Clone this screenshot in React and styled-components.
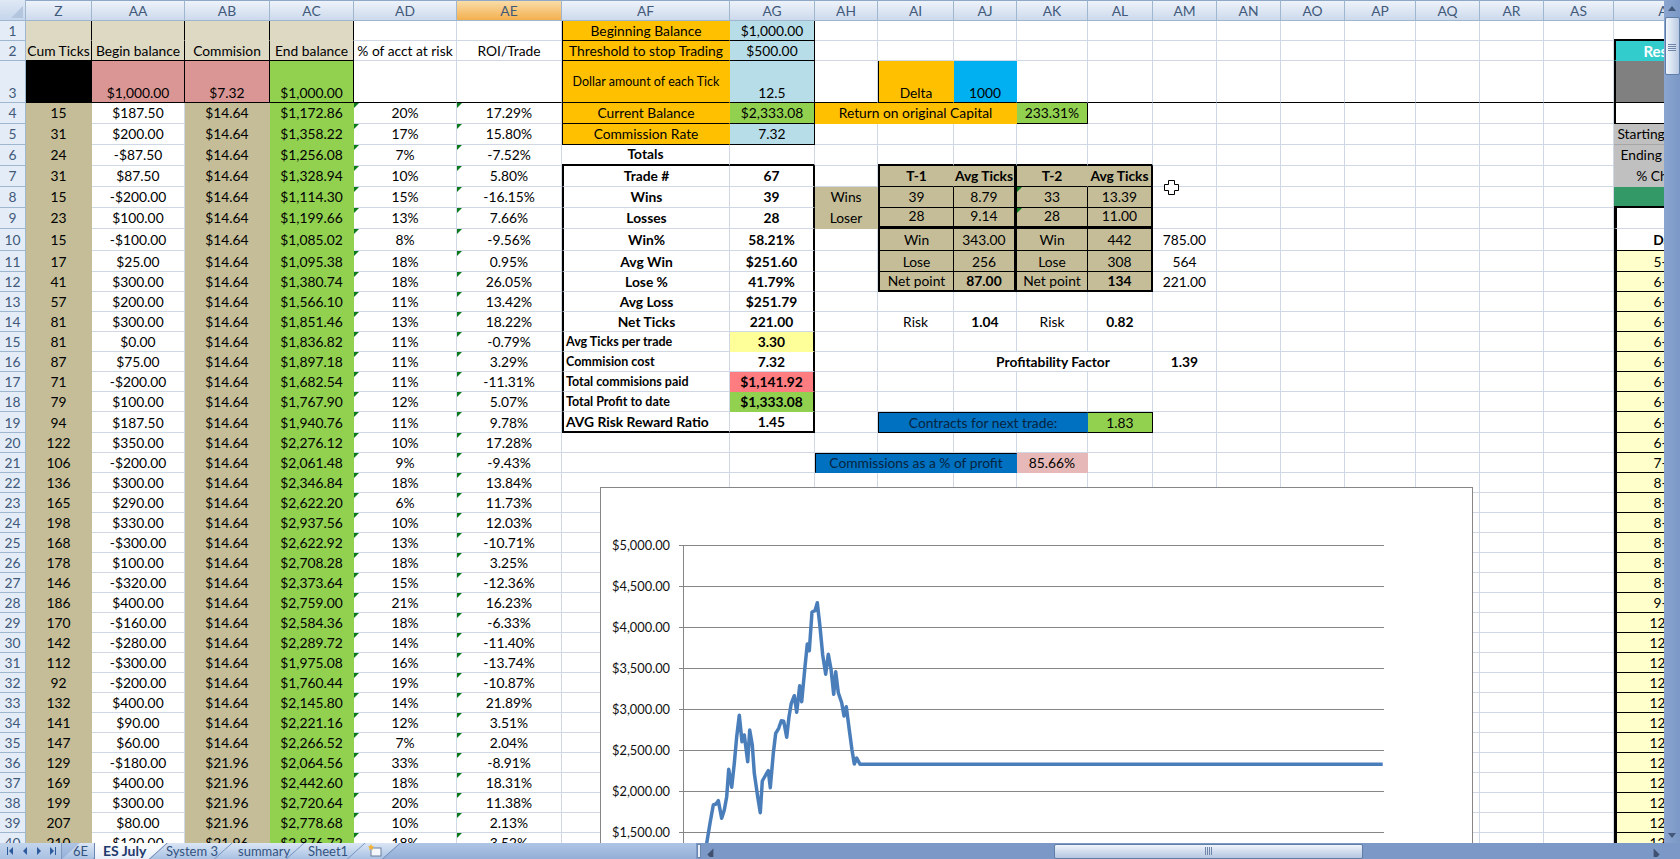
import styled, { createGlobalStyle } from 'styled-components';

const GRID = '#d0d7e5';
const TAN = '#c4bd97';
const TAN_LIGHT = '#ddd9c3';
const ORANGE = '#ffc000';
const SKY = '#b7dde8';
const GREEN = '#92d050';
const ROSE = '#d99694';
const BLUE = '#0070c0';

const COLUMNS = [
  ['Z', 66], ['AA', 93], ['AB', 85], ['AC', 84], ['AD', 103], ['AE', 105], ['AF', 168], ['AG', 85],
  ['AH', 63], ['AI', 76], ['AJ', 63], ['AK', 71], ['AL', 65], ['AM', 64], ['AN', 64], ['AO', 64],
  ['AP', 71], ['AQ', 64], ['AR', 64], ['AS', 70], ['AT', 106],
];
const LAST_ROW = 40;

const rowHeight = (r) => {
  if (r === 3) return 42;
  if (r === 10) return 22;
  if (r >= 4 && r <= 9) return 21;
  if (r === 11 || r === 19) return 21;
  return 20;
};

// rows 4 to 10 sit a pixel higher in their taller cells
const rowLine = (r) => (r >= 4 && r <= 10 ? 20 : 18);

const trades = [
  [15, '$187.50', '$1,172.86', '20%', '17.29%'], [31, '$200.00', '$1,358.22', '17%', '15.80%'],
  [24, '-$87.50', '$1,256.08', '7%', '-7.52%'], [31, '$87.50', '$1,328.94', '10%', '5.80%'],
  [15, '-$200.00', '$1,114.30', '15%', '-16.15%'], [23, '$100.00', '$1,199.66', '13%', '7.66%'],
  [15, '-$100.00', '$1,085.02', '8%', '-9.56%'], [17, '$25.00', '$1,095.38', '18%', '0.95%'],
  [41, '$300.00', '$1,380.74', '18%', '26.05%'], [57, '$200.00', '$1,566.10', '11%', '13.42%'],
  [81, '$300.00', '$1,851.46', '13%', '18.22%'], [81, '$0.00', '$1,836.82', '11%', '-0.79%'],
  [87, '$75.00', '$1,897.18', '11%', '3.29%'], [71, '-$200.00', '$1,682.54', '11%', '-11.31%'],
  [79, '$100.00', '$1,767.90', '12%', '5.07%'], [94, '$187.50', '$1,940.76', '11%', '9.78%'],
  [122, '$350.00', '$2,276.12', '10%', '17.28%'], [106, '-$200.00', '$2,061.48', '9%', '-9.43%'],
  [136, '$300.00', '$2,346.84', '18%', '13.84%'], [165, '$290.00', '$2,622.20', '6%', '11.73%'],
  [198, '$330.00', '$2,937.56', '10%', '12.03%'], [168, '-$300.00', '$2,622.92', '13%', '-10.71%'],
  [178, '$100.00', '$2,708.28', '18%', '3.25%'], [146, '-$320.00', '$2,373.64', '15%', '-12.36%'],
  [186, '$400.00', '$2,759.00', '21%', '16.23%'], [170, '-$160.00', '$2,584.36', '18%', '-6.33%'],
  [142, '-$280.00', '$2,289.72', '14%', '-11.40%'], [112, '-$300.00', '$1,975.08', '16%', '-13.74%'],
  [92, '-$200.00', '$1,760.44', '19%', '-10.87%'], [132, '$400.00', '$2,145.80', '14%', '21.89%'],
  [141, '$90.00', '$2,221.16', '12%', '3.51%'], [147, '$60.00', '$2,266.52', '7%', '2.04%'],
  [129, '-$180.00', '$2,064.56', '33%', '-8.91%'], [169, '$400.00', '$2,442.60', '18%', '18.31%'],
  [199, '$300.00', '$2,720.64', '20%', '11.38%'], [207, '$80.00', '$2,778.68', '10%', '2.13%'],
  [210, '$120.00', '$2,876.72', '18%', '3.52%'],
];

const dates = ['5-Jul', '6-Jul', '6-Jul', '6-Jul', '6-Jul', '6-Jul', '6-Jul', '6-Jul', '6-Jul', '6-Jul', '7-Jul',
  '8-Jul', '8-Jul', '8-Jul', '8-Jul', '8-Jul', '8-Jul', '9-Jul'];

// every filled or written cell, by its A1 reference
const cells = {};
const put = (ref, text, props = {}) => {
  cells[ref] = { text, ...props };
};

['Z', 'AA', 'AB', 'AC'].forEach((col) => {
  put(`${col}1`, '', { $fill: TAN_LIGHT, $r: 1 });
  put(`${col}3`, '', { $r: 1 });
});
put('Z1', '', { $fill: TAN_LIGHT, $r: 1 });
put('Z2', 'Cum Ticks', { $fill: TAN_LIGHT, $r: 1, $b: 1 });
put('AA2', 'Begin balance', { $fill: TAN_LIGHT, $r: 1, $b: 1 });
put('AB2', 'Commision', { $fill: TAN_LIGHT, $r: 1, $b: 1 });
put('AC2', 'End balance', { $fill: TAN_LIGHT, $r: 1, $b: 1 });
put('AD2', '% of acct at risk');
put('AE2', 'ROI/Trade');
put('Z3', '', { $fill: '#000', $r: 1 });
put('AA3', '$1,000.00', { $fill: ROSE, $r: 1 });
put('AB3', '$7.32', { $fill: ROSE, $r: 1 });
put('AC3', '$1,000.00', { $fill: GREEN, $r: 1 });

trades.forEach(([ticks, begin, end, risk, roi], i) => {
  const r = i + 4;
  put(`Z${r}`, ticks, { $fill: TAN });
  put(`AA${r}`, begin);
  put(`AB${r}`, r >= 36 ? '$21.96' : '$14.64', { $fill: TAN });
  put(`AC${r}`, end, { $fill: GREEN });
  put(`AD${r}`, risk, { $mark: true });
  put(`AE${r}`, roi, { $mark: true });
});

// settings block
[
  ['Beginning Balance', '$1,000.00', SKY],
  ['Threshold to stop Trading', '$500.00', SKY],
  ['Dollar amount of each Tick', '12.5', SKY],
  ['Current Balance', '$2,333.08', GREEN],
  ['Commission Rate', '7.32', SKY],
].forEach(([label, value, fill], i) => {
  const r = i + 1;
  put(`AF${r}`, label, { $fill: ORANGE, $l: 1, $b: 1, $small: r === 3, $mid: r === 3 });
  put(`AG${r}`, value, { $fill: fill, $r: 1, $b: 1 });
});
put('AF6', 'Totals', { $bold: true, $b: 2 });
put('AG6', '', { $b: 2 });

// totals box
[
  ['Trade #', '67'], ['Wins', '39'], ['Losses', '28'], ['Win%', '58.21%'], ['Avg Win', '$251.60'], ['Lose %', '41.79%'],
  ['Avg Loss', '$251.79'], ['Net Ticks', '221.00'],
].forEach(([label, value], i) => {
  put(`AF${i + 7}`, label, { $bold: true, $l: 2 });
  put(`AG${i + 7}`, value, { $bold: true, $r: 2 });
});
[
  ['Avg Ticks per trade', '3.30', '#ffff99'], ['Commision cost', '7.32'], ['Total commisions paid', '$1,141.92', '#ff7c80'],
  ['Total Profit to date', '$1,333.08', GREEN],
].forEach(([label, value, fill], i) => {
  put(`AF${i + 15}`, label, { $bold: true, $l: 2, $left: true, $small: true });
  put(`AG${i + 15}`, value, { $bold: true, $r: 2, $fill: fill });
});
put('AF19', 'AVG Risk Reward Ratio', { $bold: true, $l: 2, $b: 2, $left: true });
put('AG19', '1.45', { $bold: true, $r: 2, $b: 2 });

put('AI3', 'Delta', { $fill: ORANGE, $l: 1 });
put('AJ3', '1000', { $fill: '#00b0f0' });
put('AH4', 'Return on original Capital', { $fill: ORANGE, $span: 3 });
put('AK4', '233.31%', { $fill: GREEN, $r: 1, $b: 1 });

// T-1 / T-2 table
['AI', 'AJ', 'AK', 'AL'].forEach((col) => put(`${col}6`, '', { $b: 2 }));
[
  ['T-1', 'Avg Ticks', 'T-2', 'Avg Ticks'],
  ['39', '8.79', '33', '13.39'],
  ['28', '9.14', '28', '11.00'],
  ['Win', '343.00', 'Win', '442'],
  ['Lose', '256', 'Lose', '308'],
  ['Net point', '87.00', 'Net point', '134'],
].forEach((row, i) => {
  const r = i + 7;
  let bottom = 1;
  if (r === 9) bottom = 3;
  if (r === 12) bottom = 2;
  const base = { $fill: TAN, $b: bottom, $bold: r === 7 };
  const strong = r === 12 ? { $bold: true } : {};
  const inner = r === 7 ? {} : { $r: 1 };
  put(`AI${r}`, row[0], { ...base, ...inner, $l: 2 });
  put(`AJ${r}`, row[1], { ...base, ...strong, $r: 3 });
  put(`AK${r}`, row[2], { ...base, ...inner, $mark: r === 8 || r === 9 });
  put(`AL${r}`, row[3], { ...base, ...strong, $r: 2 });
});
put('AH8', 'Wins', { $fill: TAN });
put('AH9', 'Loser', { $fill: TAN });
put('AM10', '785.00');
put('AM11', '564');
put('AM12', '221.00');
put('AI14', 'Risk');
put('AJ14', '1.04', { $bold: true });
put('AK14', 'Risk');
put('AL14', '0.82', { $bold: true });
put('AJ16', 'Profitability Factor', { $bold: true, $span: 3 });
put('AM16', '1.39', { $bold: true });
put('AI19', 'Contracts for next trade:', { $fill: BLUE, $span: 3, $l: 1, $t: 1, $b: 1, $ink: '#06243f' });
put('AL19', '1.83', { $fill: GREEN, $b: 1, $r: 1, $t: 1 });
put('AH21', 'Commissions as a % of profit', { $fill: BLUE, $span: 3, $l: 1, $t: 1, $ink: '#06243f' });
put('AK21', '85.66%', { $fill: '#e6b8b7' });

// results column, cut off by the scroll bar
put('AT1', '', { $b: 2 });
put('AT2', 'Results', { $fill: '#33cccc', $l: 2, $bold: true, $big: true, $ink: '#fff' });
put('AT3', '', { $fill: '#808080', $l: 2 });
put('AT4', '', { $l: 2, $b: 1 });
put('AT5', 'Starting Balance', { $fill: '#c0c0c0', $b: 1, $lineInk: '#a6a6a6' });
put('AT6', 'Ending Balance', { $fill: '#c0c0c0' });
put('AT7', '% Change', { $fill: '#c0c0c0' });
put('AT8', '', { $fill: '#339966', $b: 2 });
put('AT9', '', { $l: 3 });
put('AT10', 'Date', { $l: 3, $bold: true, $b: 1 });
for (let r = 11; r <= LAST_ROW; r += 1) {
  put(`AT${r}`, dates[r - 11] || '12-Jul', { $fill: '#ffffcc', $l: 3, $b: 1 });
}

// blue line read off the chart, in px from the top left of the plot window
const equity = [
  [350, 1090], [360, 1030], [370, 975], [378, 972], [385, 962], [395, 1015], [403, 990], [410, 950], [416, 868], [425, 922],
  [433, 850], [440, 770], [448, 706], [456, 785], [463, 765], [473, 845], [479, 750], [487, 795], [493, 880], [503, 950],
  [511, 998], [517, 903], [527, 885], [535, 872], [541, 923], [550, 820], [557, 760], [566, 745], [574, 722], [581, 724],
  [590, 772], [597, 710], [604, 670], [613, 647], [620, 697], [629, 617], [635, 665], [645, 560], [652, 492], [658, 512],
  [666, 396], [675, 392], [682, 368], [690, 440], [698, 525], [707, 583], [715, 523], [723, 567], [731, 643], [737, 575],
  [745, 638], [755, 668], [762, 708], [769, 680], [778, 750], [786, 810], [793, 852], [800, 834], [810, 853], [2378, 853],
].map(([x, y]) => `${(x / 3 - 11).toFixed(1)},${(y / 3 - 8).toFixed(1)}`).join(' ');

const axisValues = ['$5,000.00', '$4,500.00', '$4,000.00', '$3,500.00', '$3,000.00', '$2,500.00', '$2,000.00', '$1,500.00', '$1,000.00'];

const GlobalStyle = createGlobalStyle`
  html, body {
    margin: 0;
    height: 100%;
    overflow: hidden;
    background: #fff;
  }
`;

const Window = styled.div`
  width: 1680px;
  height: 859px;
  display: flex;
  flex-direction: column;
  font-family: Lato, "Open Sans", "Liberation Sans", sans-serif;
  font-size: 13.8px;
  color: #000;
`;

const Body = styled.div`
  display: flex;
  height: 843px;
`;

const Sheet = styled.div`
  position: relative;
  width: 1664px;
  overflow: hidden;
`;

const Grid = styled.div`
  display: grid;
  grid-template-columns: 26px ${COLUMNS.map(([, w]) => `${w}px`).join(' ')};
  grid-auto-rows: min-content;
`;

const Corner = styled.div`
  height: 21px;
  box-sizing: border-box;
  background: linear-gradient(#dfe8f5, #c6d6ec);
  border-right: 1px solid #9eb6ce;
  border-bottom: 1px solid #9eb6ce;
  position: relative;

  &::after {
    content: '';
    position: absolute;
    right: 2px;
    bottom: 2px;
    border-style: solid;
    border-width: 0 0 12px 12px;
    border-color: transparent transparent #b4c6de transparent;
  }
`;

const ColHead = styled.div`
  height: 21px;
  box-sizing: border-box;
  display: flex;
  align-items: center;
  justify-content: center;
  overflow: hidden;
  color: #41597a;
  border-top: 1px solid #8fa8c8;
  border-right: 1px solid #9eb6ce;
  border-bottom: 1px solid #9eb6ce;
  background: ${(p) => (p.$active ? 'linear-gradient(#f9dca8, #f3b04e)' : 'linear-gradient(#eef3fa 0%, #dde6f3 50%, #cddaec 100%)')};
`;

const RowHead = styled.div`
  height: ${(p) => p.$height}px;
  box-sizing: border-box;
  display: flex;
  align-items: flex-end;
  justify-content: center;
  line-height: ${(p) => p.$line}px;
  color: #41597a;
  background: #e4ecf7;
  border-right: 1px solid #9eb6ce;
  border-bottom: 1px solid #9eb6ce;
`;

const fontSize = (p) => {
  if (p.$small) return '12.5px';
  if (p.$big) return '15px';
  return 'inherit';
};

const Cell = styled.div`
  position: relative;
  box-sizing: border-box;
  min-width: 0;
  height: ${(p) => p.$height}px;
  grid-column: span ${(p) => p.$span || 1};
  display: flex;
  align-items: ${(p) => (p.$mid ? 'center' : 'flex-end')};
  justify-content: ${(p) => (p.$left ? 'flex-start' : 'center')};
  padding: 0 ${(p) => (p.$left ? '2px' : '0')};
  line-height: ${(p) => p.$line}px;
  white-space: nowrap;
  overflow: hidden;
  font-size: ${fontSize};
  font-weight: ${(p) => (p.$bold ? 700 : 400)};
  color: ${(p) => p.$ink || '#000'};
  background: ${(p) => p.$fill || 'transparent'};
  border-right: ${(p) => (p.$r ? `${p.$r}px solid #000` : `1px solid ${p.$fill || GRID}`)};
  border-bottom: ${(p) => (p.$b ? `${p.$b}px solid ${p.$lineInk || '#000'}` : `1px solid ${p.$fill || GRID}`)};
  border-left: ${(p) => (p.$l ? `${p.$l}px solid #000` : 'none')};
  border-top: ${(p) => (p.$t ? `${p.$t}px solid #000` : 'none')};

  ${(p) => p.$mark && `
    &::before {
      content: '';
      position: absolute;
      top: 0;
      left: 0;
      border-style: solid;
      border-width: 5px 5px 0 0;
      border-color: #0b7a1f transparent transparent transparent;
    }
  `}
`;

const ChartBox = styled.div`
  position: absolute;
  left: 600px;
  top: 487px;
  width: 873px;
  height: 440px;
  box-sizing: border-box;
  background: #fff;
  border: 1px solid #868686;
`;

const ChartSvg = styled.svg`
  display: block;
  font-family: Lato, "Open Sans", "Liberation Sans", sans-serif;
  font-size: 12.8px;
  fill: #111;
`;

const PointerIcon = styled.svg`
  position: absolute;
  left: 1164px;
  top: 180px;
`;

const VScroll = styled.div`
  width: 16px;
  display: flex;
  flex-direction: column;
  align-items: center;
  background: linear-gradient(90deg, #8aa5cf, #7b98c6);
`;

const ArrowSlot = styled.div`
  height: 17px;
  display: flex;
  align-items: center;
  justify-content: center;
  flex: none;
`;

const VThumb = styled.div`
  width: 15px;
  height: 58px;
  box-sizing: border-box;
  flex: none;
  display: flex;
  flex-direction: column;
  gap: 1px;
  align-items: center;
  justify-content: flex-start;
  padding-top: 26px;
  background: linear-gradient(90deg, #f1f5fb, #d5e0f0 50%, #b9c9e2);
  border: 1px solid #5f7ea8;
  border-radius: 2px;

  i {
    display: block;
    width: 8px;
    height: 1px;
    background: #6f86a8;
  }
`;

const Track = styled.div`
  flex: 1;
`;

const BottomBar = styled.div`
  height: 16px;
  display: flex;
  isolation: isolate;
  background: #7b98c6;
  font-size: 13px;
`;

const TabArea = styled.div`
  width: 696px;
  flex: none;
  display: flex;
  background: linear-gradient(#aec5e5, #94aed6);
  overflow: hidden;
`;

const NavButtons = styled.div`
  position: relative;
  z-index: 3;
  width: 62px;
  flex: none;
  background: linear-gradient(#c3d5ec, #a9c1e2);
  border-right: 1px solid #7d97bd;
  box-sizing: border-box;

  svg {
    display: block;
  }
`;

const Tab = styled.div`
  position: relative;
  box-sizing: border-box;
  width: ${(p) => p.$width}px;
  padding-left: ${(p) => p.$pad || 0}px;
  flex: none;
  display: flex;
  align-items: center;
  justify-content: flex-start;
  white-space: nowrap;
  line-height: 16px;
  font-size: ${(p) => (p.$active ? '14px' : 'inherit')};
  font-weight: ${(p) => (p.$active ? 700 : 400)};
  color: ${(p) => (p.$active ? '#1e3a6d' : '#33527f')};
  z-index: ${(p) => (p.$active ? 2 : 1)};

  &::before {
    content: '';
    position: absolute;
    inset: 0;
    z-index: -1;
    transform: skewX(-48deg);
    transform-origin: bottom;
    border-right: 1px solid #6a86b0;
    background: ${(p) => (p.$active ? 'linear-gradient(#fff, #e8eef8)' : 'linear-gradient(#dbe6f5, #a8c1e3)')};
  }

  &::after {
    content: '';
    position: absolute;
    top: 0;
    bottom: 0;
    left: 0;
    width: 20px;
    z-index: -1;
    display: ${(p) => (p.$active ? 'block' : 'none')};
    background: linear-gradient(#fff, #e8eef8);
    border-left: 1px solid #6a86b0;
  }
`;

const Splitter = styled.div`
  width: 4px;
  height: 14px;
  margin: 1px 0 1px 1px;
  box-sizing: border-box;
  flex: none;
  background: #e8eef8;
  border: 1px solid #6a86b0;
`;

const HScroll = styled.div`
  flex: 1;
  display: flex;
  align-items: center;
  padding-left: 4px;
`;

const HThumb = styled.div`
  width: 309px;
  height: 15px;
  margin-left: 337px;
  flex: none;
  box-sizing: border-box;
  display: flex;
  align-items: center;
  justify-content: center;
  gap: 1px;
  background: linear-gradient(#f1f5fb, #d0dcee 50%, #b6c7e0);
  border: 1px solid #5f7ea8;
  border-radius: 2px;

  i {
    display: block;
    width: 1px;
    height: 8px;
    background: #6f86a8;
  }
`;

const HEnd = styled.div`
  margin-left: auto;
  width: 32px;
  display: flex;
  align-items: center;
  justify-content: flex-start;
  padding-left: 2px;
  box-sizing: border-box;
`;

const Triangle = ({ points, fill = '#44587a', w = 10, h = 10 }) => (
  <svg width={w} height={h} viewBox="0 0 10 10">
    <polygon points={points} fill={fill} />
  </svg>
);

const renderCells = () => {
  const out = [];
  for (let r = 1; r <= LAST_ROW; r += 1) {
    const height = rowHeight(r);
    const line = rowLine(r);
    out.push(<RowHead key={`h${r}`} $height={height} $line={line}>{r}</RowHead>);
    let skip = 0;
    COLUMNS.forEach(([col]) => {
      if (skip > 0) {
        skip -= 1;
        return;
      }
      const { text = '', ...props } = cells[`${col}${r}`] || {};
      skip = (props.$span || 1) - 1;
      // thick rule under the frozen heading rows runs across the whole sheet
      if (r === 3 && !props.$b) props.$b = 1;
      out.push(<Cell key={`${col}${r}`} $height={height} $line={line} {...props}>{text}</Cell>);
    });
  }
  return out;
};

const App = () => (
  <>
    <GlobalStyle />
    <Window>
      <Body>
        <Sheet>
          <Grid>
            <Corner />
            {COLUMNS.map(([col]) => (
              <ColHead key={col} $active={col === 'AE'}>{col}</ColHead>
            ))}
            {renderCells()}
          </Grid>

          <ChartBox>
            <ChartSvg width="871" height="438">
              {axisValues.map((label, i) => {
                const y = 57.5 + i * 41;
                return (
                  <g key={label}>
                    <line x1="78" x2="783" y1={y} y2={y} stroke="#868686" />
                    <text x="69" y={y + 4.5} textAnchor="end">{label}</text>
                  </g>
                );
              })}
              <line x1="82.5" x2="82.5" y1="57" y2="438" stroke="#868686" />
              <polyline points={equity} fill="none" stroke="#4a7ebb" strokeWidth="3.5" strokeLinejoin="round" />
            </ChartSvg>
          </ChartBox>

          <PointerIcon width="15" height="15" viewBox="0 0 15 15">
            <path d="M4.500.5h6v4h4v6h-4v4h-6v-4h-4v-6h4z" fill="#fff" stroke="#000" />
          </PointerIcon>
        </Sheet>

        <VScroll>
          <ArrowSlot><Triangle points="5,2 9,7 1,7" /></ArrowSlot>
          <VThumb><i /><i /><i /><i /></VThumb>
          <Track />
          <ArrowSlot><Triangle points="1,3 9,3 5,8" /></ArrowSlot>
        </VScroll>
      </Body>

      <BottomBar>
        <TabArea>
          <NavButtons>
            <svg width="61" height="16" viewBox="0 0 61 16" fill="#2c5a9c">
              <path d="M7 4h1v8H7zM13 4v8l-4-4zM27 4v8l-4-4zM37 4l4 4-4 4zM50 4l4 4-4 4zM55 4h1v8h-1z" />
            </svg>
          </NavButtons>
          <Tab $width={32} $pad={11}>6E</Tab>
          <Tab $width={56} $pad={9} $active>ES July</Tab>
          <Tab $width={65} $pad={16}>System 3</Tab>
          <Tab $width={72} $pad={23}>summary</Tab>
          <Tab $width={61} $pad={21}>Sheet1</Tab>
          <Tab $width={35} $pad={19}>
            <svg width="16" height="14" viewBox="0 0 16 14">
              <rect x="4" y="4" width="10" height="8" fill="#f4f7fb" stroke="#6d7f9c" />
              <path d="M4 0l1 2 2 .5-1.5 1.5.5 2-2-1-2 1 .5-2L1 2.500 3 2z" fill="#f2b233" />
            </svg>
          </Tab>
        </TabArea>
        <Splitter />
        <HScroll>
          <Triangle points="7,3 7,13 2,8" w={12} h={12} fill="#3f5070" />
          <HThumb><i /><i /><i /><i /></HThumb>
          <HEnd><Triangle points="3,3 8,8 3,13" w={12} h={12} fill="#3f5070" /></HEnd>
        </HScroll>
      </BottomBar>
    </Window>
  </>
);

export default App;
